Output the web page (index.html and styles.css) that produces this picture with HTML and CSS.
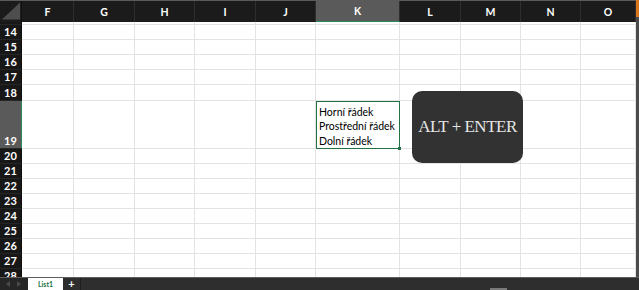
FILE: index.html
```html
<!DOCTYPE html>
<html lang="cs">
<head>
  <meta charset="UTF-8" />
  <title>List1</title>
  <link rel="stylesheet" href="styles.css">
</head>
<body>

<div class="app">
  <div class="main">
    <div class="sheet">

      <!-- Záhlaví sloupců -->
      <div class="colhead">
        <div class="corner">
          <svg width="22" height="21" viewBox="0 0 22 21"><polygon points="2,19 21,1 21,19" fill="#4e4e4e"/></svg>
        </div>
        <div>F</div>
        <div>G</div>
        <div>H</div>
        <div>I</div>
        <div>J</div>
        <div class="sel">K</div>
        <div>L</div>
        <div>M</div>
        <div>N</div>
        <div>O</div>
      </div>

      <!-- Buňky listu -->
      <div class="viewport">
        <div class="rows">
          <div class="row"><div class="rh">13</div><div></div><div></div><div></div><div></div><div></div><div></div><div></div><div></div><div></div><div></div></div>
          <div class="row"><div class="rh">14</div><div></div><div></div><div></div><div></div><div></div><div></div><div></div><div></div><div></div><div></div></div>
          <div class="row"><div class="rh">15</div><div></div><div></div><div></div><div></div><div></div><div></div><div></div><div></div><div></div><div></div></div>
          <div class="row"><div class="rh">16</div><div></div><div></div><div></div><div></div><div></div><div></div><div></div><div></div><div></div><div></div></div>
          <div class="row"><div class="rh">17</div><div></div><div></div><div></div><div></div><div></div><div></div><div></div><div></div><div></div><div></div></div>
          <div class="row tall18"><div class="rh">18</div><div></div><div></div><div></div><div></div><div></div><div></div><div></div><div></div><div></div><div></div></div>
          <div class="row tall19"><div class="rh sel">19</div><div></div><div></div><div></div><div></div><div></div>
            <div class="active">Horní řádek<br>Prostřední řádek<br>Dolní řádek<span class="handle"></span></div>
            <div></div><div></div><div></div><div></div></div>
          <div class="row"><div class="rh">20</div><div></div><div></div><div></div><div></div><div></div><div></div><div></div><div></div><div></div><div></div></div>
          <div class="row"><div class="rh">21</div><div></div><div></div><div></div><div></div><div></div><div></div><div></div><div></div><div></div><div></div></div>
          <div class="row"><div class="rh">22</div><div></div><div></div><div></div><div></div><div></div><div></div><div></div><div></div><div></div><div></div></div>
          <div class="row"><div class="rh">23</div><div></div><div></div><div></div><div></div><div></div><div></div><div></div><div></div><div></div><div></div></div>
          <div class="row"><div class="rh">24</div><div></div><div></div><div></div><div></div><div></div><div></div><div></div><div></div><div></div><div></div></div>
          <div class="row"><div class="rh">25</div><div></div><div></div><div></div><div></div><div></div><div></div><div></div><div></div><div></div><div></div></div>
          <div class="row"><div class="rh">26</div><div></div><div></div><div></div><div></div><div></div><div></div><div></div><div></div><div></div><div></div></div>
          <div class="row"><div class="rh">27</div><div></div><div></div><div></div><div></div><div></div><div></div><div></div><div></div><div></div><div></div></div>
          <div class="row"><div class="rh">28</div><div></div><div></div><div></div><div></div><div></div><div></div><div></div><div></div><div></div><div></div></div>
        </div>

        <!-- Popisek klávesové zkratky -->
        <div class="callout">ALT + ENTER</div>
      </div>
    </div>
    <div class="edge"></div>
  </div>

  <!-- Záložky listů -->
  <div class="tabbar">
    <div class="arrows">
      <svg width="28" height="12" viewBox="0 0 28 12"><polygon points="10,3 10,9 6,6" fill="#4a4a4a"/><polygon points="17,3 17,9 21,6" fill="#4a4a4a"/></svg>
    </div>
    <div class="tab">List1</div>
    <div class="add">+</div>
    <div class="rest"><span class="thumb"></span></div>
  </div>
</div>

</body>
</html>
```

FILE: styles.css
```css
* {
  box-sizing: border-box;
}
body {
  margin: 0;
  background: #fff;
  font-family: Lato, "Open Sans", sans-serif;
}
.app {
  width: 639px;
  height: 290px;
  display: flex;
  flex-direction: column;
  overflow: hidden;
}
.main {
  display: flex;
  height: 277px;
}
.sheet {
  width: 636px;
  display: flex;
  flex-direction: column;
}
.colhead, .row {
  display: grid;
  grid-template-columns: 22px 52px 61px 60px 61px 60px 84px 61px 60px 60px 55px;
}

/* záhlaví sloupců */
.colhead {
  height: 22px;
  border-top: 1px solid #5a5a5a;
  background: #1b1b1b;
}
.colhead > div {
  color: #fff;
  font-weight: 700;
  font-size: 10.5px;
  display: flex;
  align-items: center;
  justify-content: center;
  border-right: 1px solid #2e2e2e;
}
.colhead .corner {
  border-right: 1px solid #111;
  align-items: flex-start;
  justify-content: flex-start;
}
.colhead .sel {
  background: #5a5a5a;
  border-bottom: 1px solid #2b8a5a;
}

/* buňky */
.viewport {
  flex: 1;
  position: relative;
  overflow: hidden;
}
.rows {
  margin-top: -12px;
}
.row {
  height: 15px;
}
.row.tall18 {
  height: 16px;
}
.row.tall19 {
  height: 48px;
}
.row > div {
  border-right: 1px solid #e3e3e3;
  border-bottom: 1px solid #e3e3e3;
}
.row > .rh {
  background: #171717;
  color: #fff;
  font-weight: 700;
  font-size: 11px;
  line-height: 11px;
  display: flex;
  align-items: flex-end;
  justify-content: center;
  padding-bottom: 2px;
  border-right: 1px solid #0e0e0e;
  border-bottom: 1px solid #262626;
}
.row > .rh.sel {
  background: #5a5a5a;
  border-right: 1px solid #2b8a5a;
}
.row > .active {
  position: relative;
  outline: 1px solid #217346;
  outline-offset: -1px;
  font-size: 10.5px;
  line-height: 14.5px;
  color: #000;
  padding: 0 0 0 3px;
  display: flex;
  flex-direction: column;
  justify-content: flex-end;
  white-space: nowrap;
}
.handle {
  position: absolute;
  right: -2px;
  bottom: -2px;
  width: 3px;
  height: 3px;
  background: #217346;
}

.callout {
  position: absolute;
  left: 412px;
  top: 69px;
  width: 111px;
  height: 72px;
  border-radius: 10px;
  background: #323232;
  color: #e6e6e6;
  font-family: "Liberation Serif", "DejaVu Serif", serif;
  font-size: 17px;
  letter-spacing: -0.5px;
  display: flex;
  align-items: center;
  justify-content: center;
}

.edge {
  width: 3px;
  background: linear-gradient(#d9731c 0, #d9731c 17px, #4b4b4b 17px);
}

/* záložky */
.tabbar {
  height: 13px;
  display: flex;
  background: #2e2e2e;
  border-top: 1px solid #5c5c5c;
}
.arrows {
  width: 28px;
  background: #262626;
}
.arrows svg {
  display: block;
}
.tab {
  width: 35px;
  background: #fff;
  color: #217346;
  font-size: 7px;
  font-weight: 700;
  text-align: center;
  line-height: 12px;
}
.add {
  width: 18px;
  color: #fff;
  font-size: 11px;
  font-weight: 700;
  text-align: center;
  line-height: 11px;
  border-right: 1px solid #1e1e1e;
}
.rest {
  flex: 1;
  position: relative;
}
.thumb {
  position: absolute;
  left: 409px;
  bottom: 0;
  width: 17px;
  height: 2px;
  background: #7a7a7a;
}
```
